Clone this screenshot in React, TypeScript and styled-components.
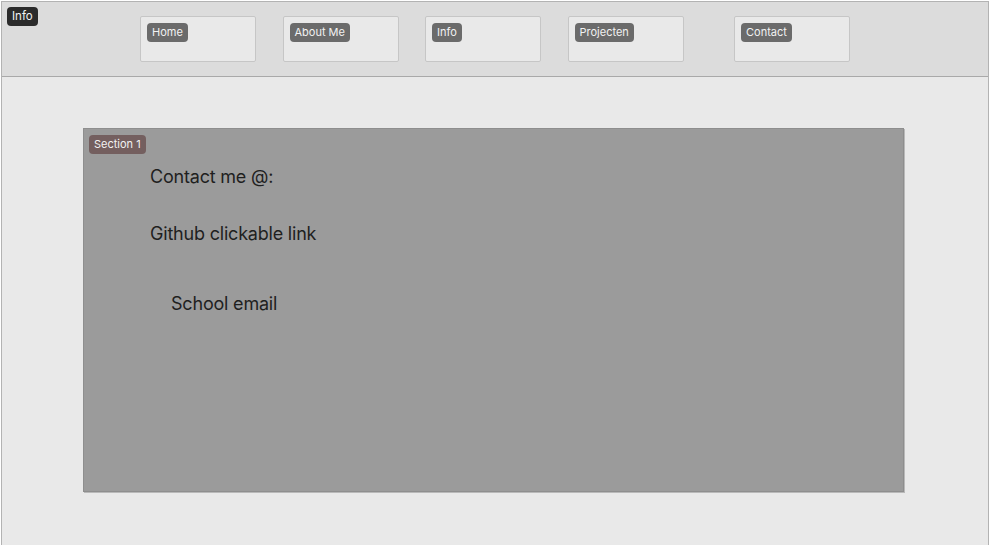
import { FC } from "react";
import styled, { createGlobalStyle } from "styled-components";

const GlobalStyle = createGlobalStyle`
  html, body {
    margin: 0;
    padding: 0;
    background: #ffffff;
    font-family: Inter, "Noto Sans", "Liberation Sans", sans-serif;
  }
`;

const Frame = styled.div`
  margin: 1px 2px 0 1px;
  border: 1px solid #b3b3b3;
  border-bottom: none;
  min-height: calc(100vh - 2px);
  background: #e9e9e9;
  box-sizing: border-box;
`;

const Header = styled.header`
  position: relative;
  height: 75px;
  background: #dcdcdc;
  border-bottom: 1px solid #a9a9a9;
  display: flex;
  align-items: flex-start;
  padding: 14px 0 0 138px;
  box-sizing: border-box;
`;

const Tag = styled.span<{ $tone: "dark" | "gray" | "brown" }>`
  display: flex;
  align-items: center;
  height: 19px;
  padding: 0 5px;
  border-radius: 4px;
  font-size: 11px;
  line-height: 19px;
  color: #f2f2f2;
  background: ${(p) =>
    p.$tone === "dark" ? "#2b2b2b" : p.$tone === "brown" ? "#745f5f" : "#6b6b6b"};
  white-space: nowrap;
`;

const CornerTag = styled(Tag)`
  position: absolute;
  left: 5px;
  top: 5px;
  font-size: 11.5px;
`;

const Nav = styled.nav`
  display: flex;
  gap: 26.5px;
`;

const NavBox = styled.div<{ $shift?: number }>`
  width: 116px;
  height: 46px;
  margin-left: ${(p) => p.$shift ?? 0}px;
  background: #e9e9e9;
  border: 1px solid #c6c6c6;
  border-radius: 2px;
  box-sizing: border-box;
  padding: 6px 0 0 6px;
  display: flex;
  align-items: flex-start;
`;

const Main = styled.main`
  padding: 51px 0 0 81px;
`;

const Section = styled.section`
  position: relative;
  width: 821px;
  height: 364px;
  box-sizing: border-box;
  background: #9b9b9b;
  border: 1px solid #8e8e8e;
  box-shadow: 1px 1px 0 #b9b9b9;
  padding: 37px 0 0 66px;
  display: flex;
  flex-direction: column;
`;

const SectionTag = styled(Tag)`
  position: absolute;
  left: 5px;
  top: 6px;
`;

const Line = styled.p<{ $gap: number; $indent?: number }>`
  margin: ${(p) => p.$gap}px 0 0 ${(p) => p.$indent ?? 0}px;
  font-size: 18px;
  line-height: 22px;
  letter-spacing: -0.2px;
  color: #1f1f1f;
`;

const navItems: { label: string; shift?: number }[] = [
  { label: "Home" },
  { label: "About Me" },
  { label: "Info" },
  { label: "Projecten" },
  { label: "Contact", shift: 24 },
];

const App: FC = () => {
  return (
    <>
      <GlobalStyle />
      <Frame>
        <Header>
          <CornerTag $tone="dark">Info</CornerTag>
          <Nav>
            {navItems.map((item) => (
              <NavBox key={item.label} $shift={item.shift}>
                <Tag $tone="gray">{item.label}</Tag>
              </NavBox>
            ))}
          </Nav>
        </Header>
        <Main>
          <Section>
            <SectionTag $tone="brown">Section 1</SectionTag>
            <Line $gap={0}>Contact me @:</Line>
            <Line $gap={35}>Github clickable link</Line>
            <Line $gap={48} $indent={21}>School email</Line>
          </Section>
        </Main>
      </Frame>
    </>
  );
};

export default App;
